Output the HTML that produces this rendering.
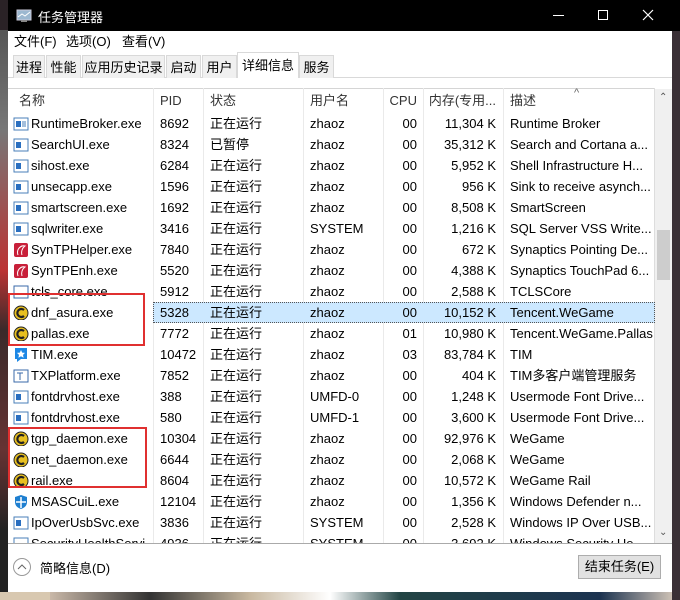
<!DOCTYPE html>
<html><head><meta charset="utf-8"><style>
*{margin:0;padding:0;box-sizing:border-box}
body{width:680px;height:600px;overflow:hidden;background:#2a2226;font-family:"Liberation Sans","Noto Sans CJK SC",sans-serif;font-size:13px;color:#000;position:relative}
.bgl{position:absolute;left:0;top:30px;width:8px;height:570px;background:linear-gradient(#555 0,#777 100px,#b33 240px,#3a2a2a 300px,#633 420px,#222 500px)}
.bgb{position:absolute;left:0;top:592px;width:680px;height:8px;background:linear-gradient(90deg,#d8c8b0 0,#d8c8b0 50px,#c9b8a8 50px,#333 150px,#c8b8a0 250px,#fff 330px,#244 400px,#1c3350 600px,#e0d0c0 680px)}
.win{position:absolute;left:8px;top:0;width:664px;height:592px;background:#fff}
.title{position:absolute;left:0;top:0;width:672px;height:31px;background:#000;color:#fff;font-size:13px}
.ab{position:absolute}
.tab{position:absolute;top:55px;height:23px;background:#f0f0f0;border:1px solid #d9d9d9;border-bottom:none;padding:1px 0 0 0;text-align:center;font-size:13px}
.row{position:absolute;left:8px;width:647px;height:21px;line-height:21px;white-space:nowrap}
.row span{position:absolute;top:0}
.c1{left:23px}.c2{left:152px}.c3{left:202px}.c4{left:302px}.c5{left:375px;width:34px;text-align:right}.c6{left:415px;width:73px;text-align:right}.c7{left:502px}
.ic{position:absolute;left:5px;top:3px;width:16px;height:15px}
.vl{position:absolute;top:88px;height:455px;width:1px;background:#eaeaea}
</style></head><body>
<div class="bgl"></div><div class="bgb"></div>
<div style="position:absolute;left:672px;top:0;width:8px;height:600px;background:#3a3036"></div>
<div class="win">
 <div class="title">
  <svg class="ab" style="left:8px;top:9px" width="16" height="14"><rect x="1" y="1" width="14" height="10" fill="#9cb8d0" stroke="#ccd" /><path d="M2 8 L6 5 L9 7 L14 3" stroke="#fff" fill="none"/><rect x="5" y="11" width="6" height="2" fill="#888"/></svg>
  <div class="ab" style="left:30px;top:7px">任务管理器</div>
  <div class="ab" style="left:545px;top:15px;width:11px;height:1px;background:#fff"></div>
  <div class="ab" style="left:590px;top:10px;width:10px;height:10px;border:1px solid #fff"></div>
  <svg class="ab" style="left:634px;top:9px" width="12" height="12"><path d="M1 1 L11 11 M11 1 L1 11" stroke="#fff" stroke-width="1.2"/></svg>
 </div>
 <div class="ab" style="left:6px;top:31px">文件(F)</div>
 <div class="ab" style="left:58px;top:31px">选项(O)</div>
 <div class="ab" style="left:114px;top:31px">查看(V)</div>
 <div class="ab" style="left:0;top:77px;width:664px;height:1px;background:#d9d9d9"></div>
 <div class="tab" style="left:5px;width:32px">进程</div>
 <div class="tab" style="left:38px;width:35px">性能</div>
 <div class="tab" style="left:74px;width:83px">应用历史记录</div>
 <div class="tab" style="left:158px;width:35px">启动</div>
 <div class="tab" style="left:194px;width:35px">用户</div>
 <div class="tab" style="left:229px;top:52px;height:26px;width:62px;background:#fff;padding-top:2px">详细信息</div>
 <div class="tab" style="left:291px;width:35px">服务</div>
</div>
<div class="ab" style="left:8px;top:88px;width:647px;height:1px;background:#d5d5d5"></div>
<div class="vl" style="left:153px"></div><div class="vl" style="left:203px"></div><div class="vl" style="left:303px"></div><div class="vl" style="left:383px"></div><div class="vl" style="left:423px"></div><div class="vl" style="left:503px"></div><div class="vl" style="left:654px;background:#ddd"></div>
<div class="row" style="top:90px;color:#333"><span style="left:11px">名称</span><span class="c2">PID</span><span class="c3">状态</span><span class="c4">用户名</span><span class="c5">CPU</span><span class="c6">内存(专用...</span><span class="c7">描述</span><span style="left:566px;top:-7px;font-size:11px;color:#666">^</span></div>
<div class="ab" style="left:153px;top:302px;width:502px;height:21px;background:#cce8ff;border:1px dotted #555"></div>
<div class="ab" style="left:655px;top:89px;width:17px;height:454px;background:#f0f0f0"></div>
<div class="ab" style="left:657px;top:230px;width:13px;height:50px;background:#cdcdcd"></div>
<div class="ab" style="left:659px;top:92px;font-size:10px;color:#555">&#8963;</div>
<div class="ab" style="left:659px;top:527px;font-size:10px;color:#555">&#8964;</div>
<div class="row" style="top:113px"><svg class="ic"><rect x="1" y="2" width="14" height="12" fill="#fff" stroke="#4a7fb8"/><rect x="3" y="5" width="5" height="6" fill="#2a6fc0"/><path d="M9 6h4M9 8h4M9 10h4" stroke="#4a7fb8"/></svg><span class="c1">RuntimeBroker.exe</span><span class="c2">8692</span><span class="c3">正在运行</span><span class="c4">zhaoz</span><span class="c5">00</span><span class="c6">11,304 K</span><span class="c7">Runtime Broker</span></div>
<div class="row" style="top:134px"><svg class="ic"><rect x="1" y="2" width="14" height="12" fill="#fff" stroke="#4a7fb8"/><rect x="3" y="5" width="5" height="6" fill="#2a6fc0"/></svg><span class="c1">SearchUI.exe</span><span class="c2">8324</span><span class="c3">已暂停</span><span class="c4">zhaoz</span><span class="c5">00</span><span class="c6">35,312 K</span><span class="c7">Search and Cortana a...</span></div>
<div class="row" style="top:155px"><svg class="ic"><rect x="1" y="2" width="14" height="12" fill="#fff" stroke="#4a7fb8"/><rect x="3" y="5" width="5" height="6" fill="#2a6fc0"/></svg><span class="c1">sihost.exe</span><span class="c2">6284</span><span class="c3">正在运行</span><span class="c4">zhaoz</span><span class="c5">00</span><span class="c6">5,952 K</span><span class="c7">Shell Infrastructure H...</span></div>
<div class="row" style="top:176px"><svg class="ic"><rect x="1" y="2" width="14" height="12" fill="#fff" stroke="#4a7fb8"/><rect x="3" y="5" width="5" height="6" fill="#2a6fc0"/></svg><span class="c1">unsecapp.exe</span><span class="c2">1596</span><span class="c3">正在运行</span><span class="c4">zhaoz</span><span class="c5">00</span><span class="c6">956 K</span><span class="c7">Sink to receive asynch...</span></div>
<div class="row" style="top:197px"><svg class="ic"><rect x="1" y="2" width="14" height="12" fill="#fff" stroke="#4a7fb8"/><rect x="3" y="5" width="5" height="6" fill="#2a6fc0"/></svg><span class="c1">smartscreen.exe</span><span class="c2">1692</span><span class="c3">正在运行</span><span class="c4">zhaoz</span><span class="c5">00</span><span class="c6">8,508 K</span><span class="c7">SmartScreen</span></div>
<div class="row" style="top:218px"><svg class="ic"><rect x="1" y="2" width="14" height="12" fill="#fff" stroke="#4a7fb8"/><rect x="3" y="5" width="5" height="6" fill="#2a6fc0"/></svg><span class="c1">sqlwriter.exe</span><span class="c2">3416</span><span class="c3">正在运行</span><span class="c4">SYSTEM</span><span class="c5">00</span><span class="c6">1,216 K</span><span class="c7">SQL Server VSS Write...</span></div>
<div class="row" style="top:239px"><svg class="ic"><rect x="1" y="1" width="14" height="14" rx="2" fill="#c8203a"/><path d="M5 13 C3 7 8 3 12 4 C9 6 8 10 9 13" stroke="#fff" fill="none"/></svg><span class="c1">SynTPHelper.exe</span><span class="c2">7840</span><span class="c3">正在运行</span><span class="c4">zhaoz</span><span class="c5">00</span><span class="c6">672 K</span><span class="c7">Synaptics Pointing De...</span></div>
<div class="row" style="top:260px"><svg class="ic"><rect x="1" y="1" width="14" height="14" rx="2" fill="#c8203a"/><path d="M5 13 C3 7 8 3 12 4 C9 6 8 10 9 13" stroke="#fff" fill="none"/></svg><span class="c1">SynTPEnh.exe</span><span class="c2">5520</span><span class="c3">正在运行</span><span class="c4">zhaoz</span><span class="c5">00</span><span class="c6">4,388 K</span><span class="c7">Synaptics TouchPad 6...</span></div>
<div class="row" style="top:281px"><svg class="ic"><rect x="1" y="2" width="14" height="12" fill="#fff" stroke="#3a6aa8"/></svg><span class="c1">tcls_core.exe</span><span class="c2">5912</span><span class="c3">正在运行</span><span class="c4">zhaoz</span><span class="c5">00</span><span class="c6">2,588 K</span><span class="c7">TCLSCore</span></div>
<div class="row" style="top:302px"><svg class="ic"><circle cx="8" cy="8" r="7" fill="#e8c020" stroke="#222"/><path d="M11 5 A4 4 0 1 0 11 11" stroke="#222" stroke-width="2.2" fill="none"/></svg><span class="c1">dnf_asura.exe</span><span class="c2">5328</span><span class="c3">正在运行</span><span class="c4">zhaoz</span><span class="c5">00</span><span class="c6">10,152 K</span><span class="c7">Tencent.WeGame</span></div>
<div class="row" style="top:323px"><svg class="ic"><circle cx="8" cy="8" r="7" fill="#e8c020" stroke="#222"/><path d="M11 5 A4 4 0 1 0 11 11" stroke="#222" stroke-width="2.2" fill="none"/></svg><span class="c1">pallas.exe</span><span class="c2">7772</span><span class="c3">正在运行</span><span class="c4">zhaoz</span><span class="c5">01</span><span class="c6">10,980 K</span><span class="c7">Tencent.WeGame.Pallas</span></div>
<div class="row" style="top:344px"><svg class="ic"><path d="M2 1h12v11h-6l-4 3v-3h-2z" fill="#1e88e5"/><path d="M8 3l1.2 2.6 2.8.3-2 2 .6 2.8L8 9.3l-2.6 1.4.6-2.8-2-2 2.8-.3z" fill="#fff"/></svg><span class="c1">TIM.exe</span><span class="c2">10472</span><span class="c3">正在运行</span><span class="c4">zhaoz</span><span class="c5">03</span><span class="c6">83,784 K</span><span class="c7">TIM</span></div>
<div class="row" style="top:365px"><svg class="ic"><rect x="1" y="2" width="14" height="12" fill="#fff" stroke="#3a6aa8"/><path d="M4 5h6M7 5v7" stroke="#3a6aa8"/></svg><span class="c1">TXPlatform.exe</span><span class="c2">7852</span><span class="c3">正在运行</span><span class="c4">zhaoz</span><span class="c5">00</span><span class="c6">404 K</span><span class="c7">TIM多客户端管理服务</span></div>
<div class="row" style="top:386px"><svg class="ic"><rect x="1" y="2" width="14" height="12" fill="#fff" stroke="#4a7fb8"/><rect x="3" y="5" width="5" height="6" fill="#2a6fc0"/></svg><span class="c1">fontdrvhost.exe</span><span class="c2">388</span><span class="c3">正在运行</span><span class="c4">UMFD-0</span><span class="c5">00</span><span class="c6">1,248 K</span><span class="c7">Usermode Font Drive...</span></div>
<div class="row" style="top:407px"><svg class="ic"><rect x="1" y="2" width="14" height="12" fill="#fff" stroke="#4a7fb8"/><rect x="3" y="5" width="5" height="6" fill="#2a6fc0"/></svg><span class="c1">fontdrvhost.exe</span><span class="c2">580</span><span class="c3">正在运行</span><span class="c4">UMFD-1</span><span class="c5">00</span><span class="c6">3,600 K</span><span class="c7">Usermode Font Drive...</span></div>
<div class="row" style="top:428px"><svg class="ic"><circle cx="8" cy="8" r="7" fill="#e8c020" stroke="#222"/><path d="M11 5 A4 4 0 1 0 11 11" stroke="#222" stroke-width="2.2" fill="none"/></svg><span class="c1">tgp_daemon.exe</span><span class="c2">10304</span><span class="c3">正在运行</span><span class="c4">zhaoz</span><span class="c5">00</span><span class="c6">92,976 K</span><span class="c7">WeGame</span></div>
<div class="row" style="top:449px"><svg class="ic"><circle cx="8" cy="8" r="7" fill="#e8c020" stroke="#222"/><path d="M11 5 A4 4 0 1 0 11 11" stroke="#222" stroke-width="2.2" fill="none"/></svg><span class="c1">net_daemon.exe</span><span class="c2">6644</span><span class="c3">正在运行</span><span class="c4">zhaoz</span><span class="c5">00</span><span class="c6">2,068 K</span><span class="c7">WeGame</span></div>
<div class="row" style="top:470px"><svg class="ic"><circle cx="8" cy="8" r="7" fill="#e8c020" stroke="#222"/><path d="M11 5 A4 4 0 1 0 11 11" stroke="#222" stroke-width="2.2" fill="none"/></svg><span class="c1">rail.exe</span><span class="c2">8604</span><span class="c3">正在运行</span><span class="c4">zhaoz</span><span class="c5">00</span><span class="c6">10,572 K</span><span class="c7">WeGame Rail</span></div>
<div class="row" style="top:491px"><svg class="ic"><path d="M8 1L14 3v5c0 4-3 6-6 7-3-1-6-3-6-7V3z" fill="#1e7fd0"/><path d="M8 3v11M3 8h10" stroke="#fff" stroke-width="1.5"/></svg><span class="c1">MSASCuiL.exe</span><span class="c2">12104</span><span class="c3">正在运行</span><span class="c4">zhaoz</span><span class="c5">00</span><span class="c6">1,356 K</span><span class="c7">Windows Defender n...</span></div>
<div class="row" style="top:512px"><svg class="ic"><rect x="1" y="2" width="14" height="12" fill="#fff" stroke="#4a7fb8"/><rect x="3" y="5" width="5" height="6" fill="#2a6fc0"/></svg><span class="c1">IpOverUsbSvc.exe</span><span class="c2">3836</span><span class="c3">正在运行</span><span class="c4">SYSTEM</span><span class="c5">00</span><span class="c6">2,528 K</span><span class="c7">Windows IP Over USB...</span></div>
<div class="ab" style="left:8px;top:533px;width:647px;height:10px;overflow:hidden"><div class="row" style="left:0;top:0"><svg class="ic"><rect x="1" y="2" width="14" height="12" fill="#fff" stroke="#4a7fb8"/></svg><span class="c1">SecurityHealthServi...</span><span class="c2">4936</span><span class="c3">正在运行</span><span class="c4">SYSTEM</span><span class="c5">00</span><span class="c6">3,692 K</span><span class="c7">Windows Security He...</span></div></div>
<div class="ab" style="left:8px;top:543px;width:664px;height:1px;background:#aaa"></div>
<div class="ab" style="left:8px;top:544px;width:664px;height:48px;background:#fff"></div>
<svg class="ab" style="left:12px;top:557px" width="20" height="20"><circle cx="10" cy="10" r="8.5" fill="none" stroke="#999"/><path d="M6 12l4-4 4 4" stroke="#666" fill="none"/></svg>
<div class="ab" style="left:40px;top:558px;font-size:13px">简略信息(D)</div>
<div class="ab" style="left:578px;top:555px;width:83px;height:24px;background:#e1e1e1;border:1px solid #adadad;text-align:center;line-height:22px;font-size:13px">结束任务(E)</div>
<div class="ab" style="left:8px;top:293px;width:137px;height:53px;border:2px solid #e03030"></div>
<div class="ab" style="left:8px;top:427px;width:139px;height:61px;border:2px solid #e03030"></div>
</body></html>
